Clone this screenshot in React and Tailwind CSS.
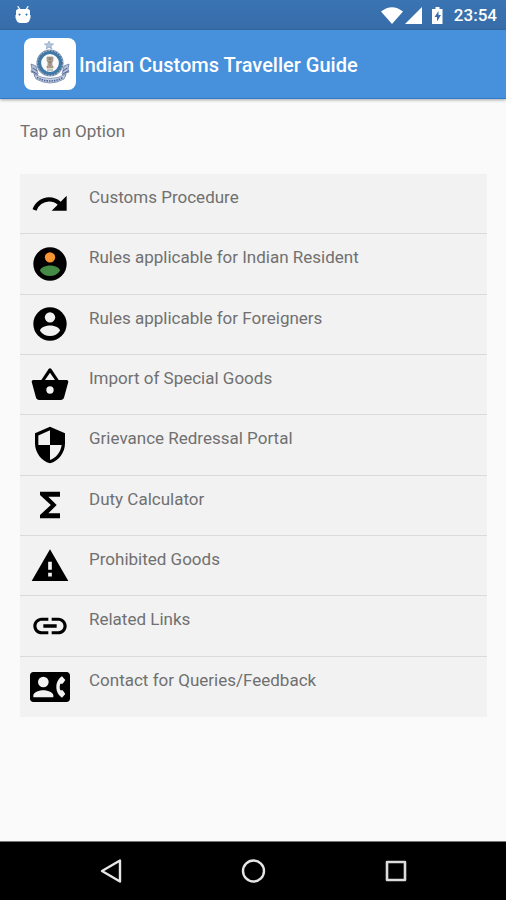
import { MdRedo, MdSecurity, MdFunctions, MdLink } from "react-icons/md";

function Person({ head, body }) {
  return (
    <svg viewBox="0 0 24 24" className="size-10" aria-hidden="true">
      <circle cx="12" cy="12" r="10" fill="#000" />
      <circle cx="12" cy="8" r="3.1" fill={head} />
      <path
        d="M12 19.2c-2.5 0-4.71-1.28-6-3.22.03-1.99 4-3.08 6-3.08 1.99 0 5.97 1.09 6 3.08-1.29 1.94-3.5 3.22-6 3.22z"
        fill={body}
      />
    </svg>
  );
}

function Glyph({ d }) {
  return (
    <svg viewBox="0 0 24 24" className="size-10" fill="currentColor" fillRule="evenodd" aria-hidden="true">
      <path d={d} />
    </svg>
  );
}

const basket =
  "M17.21 9l-4.38-6.56c-.19-.28-.51-.42-.83-.42-.32 0-.64.14-.83.43L6.79 9H2c-.55 0-1 .45-1 1 0 .09.01.18.04.27l2.54 9.27c.23.84 1 1.46 1.92 1.46h13c.92 0 1.69-.62 1.93-1.46l2.54-9.27L23 10c0-.55-.45-1-1-1h-4.79zM9 9l3-4.4L15 9H9zM12 12.8a2.2 2.2 0 1 0 0 4.4 2.2 2.2 0 1 0 0-4.4z";
const warning = "M1 21h22L12 2 1 21zM13.1 18.300h-2.200v-2.300h2.200zM13.100 14.200h-2.200V9.400h2.200z";
const contact =
  "M22 3H2C.9 3 0 3.9 0 5v14c0 1.1.9 2 2 2h20c1.1 0 2-.9 2-2V5c0-1.1-.9-2-2-2zM8 5.800a3.200 3.200 0 1 1 0 6.400 3.200 3.200 0 1 1 0-6.400zM14 18.200H2V17c0-2 4-3.100 6-3.100s6 1.100 6 3.100zM18.200 14h1.400l1.600 2.200-2 2.200c-1.900-1.200-3.400-3.500-3.400-6.400s1.500-5.200 3.400-6.400l2 2.200-1.600 2.200h-1.400c-.5 1.300-.5 2.700 0 4z";

const options = [
  { label: "Customs Procedure", icon: <MdRedo className="size-10" /> },
  { label: "Rules applicable for Indian Resident", icon: <Person head="#f79433" body="#448c45" /> },
  { label: "Rules applicable for Foreigners", icon: <Person head="#f2f2f2" body="#f2f2f2" /> },
  { label: "Import of Special Goods", icon: <Glyph d={basket} /> },
  { label: "Grievance Redressal Portal", icon: <MdSecurity className="size-10" /> },
  { label: "Duty Calculator", icon: <MdFunctions className="size-10" /> },
  { label: "Prohibited Goods", icon: <Glyph d={warning} /> },
  { label: "Related Links", icon: <MdLink className="size-10" /> },
  { label: "Contact for Queries/Feedback", icon: <Glyph d={contact} /> },
];

function Emblem() {
  return (
    <svg viewBox="0 0 52 52" className="size-13" role="img" aria-label="Indian Customs emblem">
      <path d="M25 3l1.200 2.700 3.400.2-2.600 1.900.8 3.200-2.800-1.800-2.800 1.800.8-3.200-2.600-1.900 3.400-.2z" fill="#b4c6da" stroke="#7f9cbc" strokeWidth=".6" />
      <path d="M7 26l5 2 2 8-3 3-1-4-3-1 1-3z" fill="#b4c1d7" stroke="#647da7" strokeWidth=".8" />
      <path d="M45 26l-5 2-2 8 3 3 1-4 3-1-1-3z" fill="#b4c1d7" stroke="#647da7" strokeWidth=".8" />
      <circle cx="26" cy="25" r="13" fill="#dce7f1" stroke="#7f97b9" strokeWidth="1.200" />
      <circle cx="26" cy="25" r="10.500" fill="#fafafa" stroke="#3f79a8" strokeWidth="3.200" />
      <circle cx="26" cy="25" r="12.200" fill="none" stroke="#3c5481" strokeWidth="1" strokeDasharray="1.500 1.500" />
      <path d="M23 19h6v4l-1 1v4h1v2h-6v-2h1v-4l-1-1z" fill="#b9aa99" stroke="#8b7f71" strokeWidth=".6" />
      <path d="M24 21h4M24 24h4M26 19v10M23 32h6" stroke="#7a736c" strokeWidth=".8" />
      <path d="M10 36q16 9 32 0l-2 5q-14 8-28 0z" fill="#c4cee0" stroke="#7589b0" strokeWidth=".8" />
      <path d="M13 39.500q13 7 26 0" fill="none" stroke="#4a6294" strokeWidth="1.600" strokeDasharray="1.500 1" />
      <path d="M9 30l4 3M8 33l5 3M43 30l-4 3M44 33l-5 3" stroke="#4a6294" strokeWidth="1" />
    </svg>
  );
}

function StatusBar() {
  return (
    <div className="flex h-[30px] items-center justify-between bg-linear-to-b from-[#3a74b3] to-[#376ca8] pr-[9px] pl-[15px] text-white">
      <svg viewBox="0 0 16 18" className="h-[18px] w-4" role="img" aria-label="Android">
        <path d="M3 .7l2 3M13 .7l-2 3" stroke="#fff" strokeWidth="1.200" strokeLinecap="round" />
        <path d="M1 5.500Q1 3 3.500 3h9Q15 3 15 5.500V9h.5v3.500H15q-.5 4-4 4.500H5q-3.500-.5-4-4.500H.5V9H1z" fill="#fff" />
        <path d="M4.500 7.500a1 1 0 1 0 .01 0M11.500 7.500a1 1 0 1 0 .01 0" fill="#3a72af" />
      </svg>
      <div className="flex items-center">
        <svg viewBox="0 0 66 20" className="mr-2 h-5 w-[66px]" role="img" aria-label="Wi-Fi, signal, battery charging">
          <path d="M1 6.500Q12 -2 23 6.500L12 19z" fill="#fff" />
          <path d="M42 2v17H25z" fill="#fff" />
          <path d="M55.500 2h4v2h3v15h-10.500V4h3.500z" fill="#fff" />
          <path d="M58.500 6l-4 6h2.500v4.500l4-6.500h-2.500z" fill="#376da9" />
        </svg>
        <time className="text-[17px] leading-5 font-medium">23:54</time>
      </div>
    </div>
  );
}

function NavigationBar() {
  return (
    <nav className="flex h-[59px] shrink-0 items-center justify-center gap-[114px] border-t border-[#777] bg-black">
      <button type="button" aria-label="Back">
        <svg viewBox="0 0 28 28" className="size-7" fill="none" stroke="#e6e6e6" strokeWidth="2.400" strokeLinejoin="round">
          <path d="M23 3.500v21L5 14z" />
        </svg>
      </button>
      <button type="button" aria-label="Home">
        <svg viewBox="0 0 28 28" className="size-7" fill="none" stroke="#e6e6e6" strokeWidth="2.400">
          <circle cx="14.500" cy="14" r="10.500" />
        </svg>
      </button>
      <button type="button" aria-label="Recent apps">
        <svg viewBox="0 0 28 28" className="size-7" fill="none" stroke="#dcdcdc" strokeWidth="2.600" strokeLinejoin="round">
          <path d="M6 5h18v18H6z" />
        </svg>
      </button>
    </nav>
  );
}

export default function App() {
  return (
    <div className="flex min-h-screen flex-col bg-[#fafafa] font-[Roboto,sans-serif]">
      <StatusBar />
      <header className="flex items-center gap-[3px] border-b border-[#2f7cc9] bg-[#4690dc] px-6 py-2 shadow-[0_1px_3px_rgba(0,0,0,0.35)]">
        <div className="rounded-lg bg-white">
          <Emblem />
        </div>
        <h1 className="pt-0.5 text-[20px] leading-7 font-medium text-white">Indian Customs Traveller Guide</h1>
      </header>
      <main className="grow pr-[19px] pl-5 pt-5">
        <h2 className="text-[17px] leading-6 text-[#707070]">Tap an Option</h2>
        <ul className="mt-[31px] grid min-h-[543px] auto-rows-fr divide-y divide-[#dadada] bg-[#f2f2f2]">
          {options.map(({ label, icon }) => (
            <li key={label} className="flex">
              <button type="button" className="flex w-full items-center gap-[19px] pl-[10px] text-left">
                <span className="shrink-0 text-black">{icon}</span>
                <span className="self-start pt-[11px] text-[17px] leading-6 text-[#707070]">{label}</span>
              </button>
            </li>
          ))}
        </ul>
      </main>
      <NavigationBar />
    </div>
  );
}
